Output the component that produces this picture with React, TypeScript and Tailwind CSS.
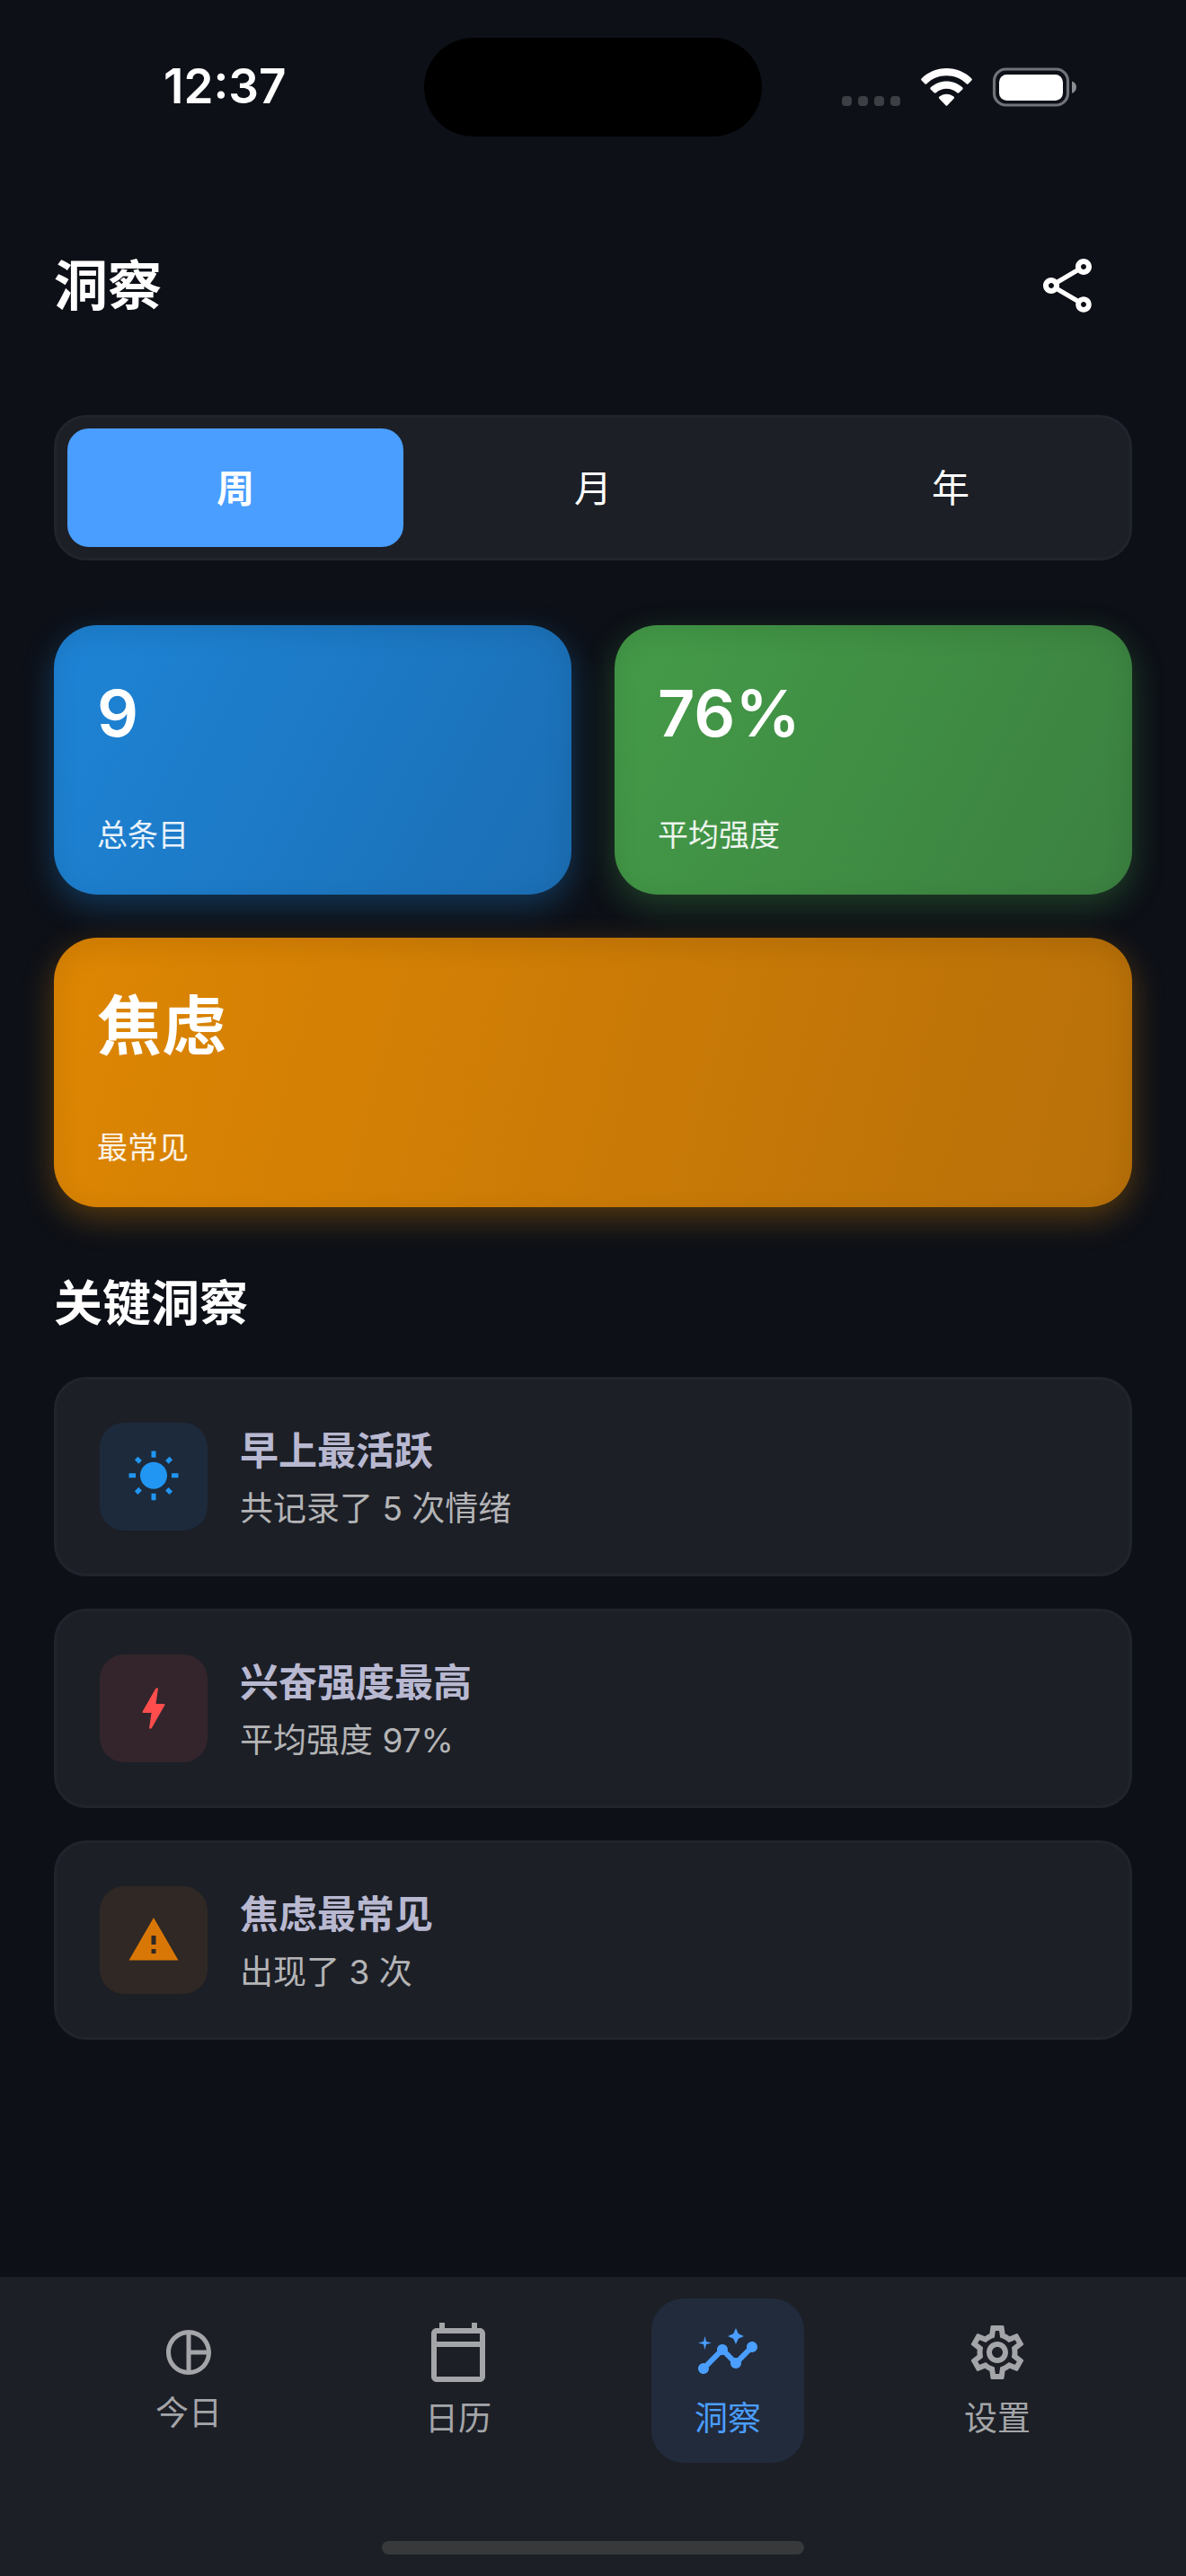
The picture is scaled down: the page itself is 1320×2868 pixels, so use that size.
import type { ReactNode } from "react";
import {
  MdBolt,
  MdInsights,
  MdOutlineCalendarToday,
  MdOutlineSettings,
  MdOutlineShare,
  MdPieChartOutline,
  MdWarning,
  MdWbSunny,
} from "react-icons/md";

const periods = ["周", "月", "年"];

function StatusBar() {
  return (
    <div className="grid h-[192px] shrink-0 grid-cols-[1fr_auto_1fr] items-start px-[120px] pt-[42px]">
      <div className="flex h-[110px] items-center pl-[62px] text-[53px] font-semibold">
        <time>12:37</time>
      </div>
      <div className="h-[110px] w-[376px] rounded-full bg-black" />
      <div className="flex h-[110px] items-center justify-end">
        <svg className="h-[44px] w-[264px]" viewBox="0 0 264 44" fill="none" aria-label="信号与电量">
          <g fill="#3c3f44">
            <rect x="1" y="32" width="11" height="11" rx="4" />
            <rect x="19" y="32" width="11" height="11" rx="4" />
            <rect x="37" y="32" width="11" height="11" rx="4" />
            <rect x="55" y="32" width="11" height="11" rx="4" />
          </g>
          <g fill="#fff">
            <path d="M117.500 1C106.500 1 97 5.200 89.600 12.400Q88.600 13.500 89.600 14.500L93.300 18.200Q94.300 19.200 95.400 18.200C101.400 12.500 109 9.300 117.500 9.300S133.600 12.500 139.600 18.200Q140.700 19.200 141.700 18.200L145.400 14.500Q146.400 13.500 145.400 12.400C138 5.200 128.500 1 117.500 1Z" />
            <path d="M117.500 15.500C110.800 15.500 104.700 18 99.800 22.300Q98.700 23.400 99.700 24.400L103.700 28.300Q104.700 29.200 105.800 28.300C109 25.500 113 23.800 117.500 23.800S126 25.500 129.200 28.300Q130.300 29.200 131.300 28.300L135.300 24.400Q136.300 23.400 135.200 22.300C130.300 18 124.200 15.500 117.500 15.500Z" />
            <path d="M117.500 29.800C114.400 29.800 111.800 30.900 109.500 32.600Q108.300 33.700 109.300 34.700L116.500 42.200Q117.500 43.200 118.500 42.200L125.700 34.700Q126.700 33.700 125.500 32.600C123.200 30.900 120.600 29.800 117.500 29.800Z" />
          </g>
          <rect x="170.500" y="2" width="82" height="40" rx="13" stroke="#717378" strokeWidth="3.200" />
          <rect x="176" y="8" width="71" height="29" rx="8.500" fill="#fff" />
          <path d="M257 15.500C260.300 16.500 262 19 262 22S260.300 27.800 257 29Z" fill="#8a8c90" />
        </svg>
      </div>
    </div>
  );
}

function StatCard({ value, label, tone }: { value: string; label: string; tone: string }) {
  return (
    <article className={`flex h-[300px] flex-col justify-between rounded-[48px] px-12 pt-[56px] pb-[42px] ${tone}`}>
      <strong className="text-[72px] leading-[84px] font-semibold">{value}</strong>
      <span className="text-[34px] leading-[48px] font-normal text-white/90">{label}</span>
    </article>
  );
}

function InsightCard({ icon, tone, title, text }: { icon: ReactNode; tone: string; title: string; text: string }) {
  return (
    <li className="flex items-center gap-9 rounded-[36px] border-3 border-[#20242d] bg-[#1c1f26] p-12">
      <div className={`flex size-[120px] shrink-0 items-center justify-center rounded-[27px] text-[60px] ${tone}`}>
        {icon}
      </div>
      <div className="flex flex-col gap-[10px]">
        <h3 className="text-[43px] leading-[62px] font-semibold text-[#b8b8d1]">{title}</h3>
        <p className="text-[37px] leading-[48px] font-normal text-[#b4b4b6]">{text}</p>
      </div>
    </li>
  );
}

function NavItem({ icon, label, active }: { icon: ReactNode; label: string; active?: boolean }) {
  return (
    <a
      href="#"
      aria-current={active ? "page" : undefined}
      className={
        active
          ? "flex flex-col items-center gap-3 rounded-[36px] bg-[#222b3c] px-12 py-6 text-[#4a9eff]"
          : "flex flex-col items-center gap-3 px-12 py-6 text-[#a4a5a8]"
      }
    >
      {icon}
      <span className="text-[37px] leading-[51px] font-normal">{label}</span>
    </a>
  );
}

export default function App() {
  return (
    <div className="flex min-h-screen flex-col bg-[#0d1017] font-['Inter','Noto_Sans_CJK_SC',sans-serif] text-white">
      <StatusBar />
      <header className="flex items-center justify-between py-[66px] pr-[72px] pl-[60px]">
        <h1 className="text-[60px] leading-[120px] font-semibold">洞察</h1>
        <button type="button" aria-label="分享" className="flex size-[120px] items-center justify-center text-[72px]">
          <MdOutlineShare />
        </button>
      </header>

      <main className="flex grow flex-col px-[60px] pt-[18px]">
        <div role="tablist" className="grid grid-cols-3 gap-6 rounded-[36px] border-3 border-[#20242d] bg-[#1c1f26] p-3">
          {periods.map((period, index) => (
            <button
              key={period}
              type="button"
              role="tab"
              aria-selected={index === 0}
              className={
                index === 0
                  ? "h-[132px] rounded-[24px] bg-[#4a9eff] text-[42px] font-semibold"
                  : "h-[132px] rounded-[24px] text-[42px] font-normal"
              }
            >
              {period}
            </button>
          ))}
        </div>

        <section className="mt-[72px] grid grid-cols-2 gap-12">
          <StatCard
            value="9"
            label="总条目"
            tone="bg-[linear-gradient(117.5deg,#1e84d6,#1b6eb4)] shadow-[0_12px_36px_#2196f34d,inset_0_8px_30px_#00000018]"
          />
          <StatCard
            value="76%"
            label="平均强度"
            tone="bg-[linear-gradient(117.5deg,#449b48,#3b8040)] shadow-[0_12px_36px_#4caf504d,inset_0_8px_30px_#00000018]"
          />
          <div className="col-span-2">
            <StatCard
              value="焦虑"
              label="最常见"
              tone="bg-[linear-gradient(104deg,#de8603,#b87009)] shadow-[0_12px_36px_#ff98004d,inset_0_8px_30px_#00000018]"
            />
          </div>
        </section>

        <h2 className="mt-[72px] text-[54px] leading-[72px] font-semibold">关键洞察</h2>
        <ul className="mt-[45px] flex flex-col gap-9">
          <InsightCard icon={<MdWbSunny />} tone="bg-[#1d2a3b] text-[#2196f3]" title="早上最活跃" text="共记录了 5 次情绪" />
          <InsightCard icon={<MdBolt />} tone="bg-[#33252b] text-[#ff4d4d]" title="兴奋强度最高" text="平均强度 97%" />
          <InsightCard icon={<MdWarning />} tone="bg-[#2f2824] text-[#d97706]" title="焦虑最常见" text="出现了 3 次" />
        </ul>
      </main>

      <footer className="flex h-[333px] shrink-0 flex-col items-center justify-between bg-[#1c1f26] pt-6 pb-6">
        <nav className="grid w-full grid-cols-4 items-center justify-items-center px-[60px]">
          <NavItem icon={<MdPieChartOutline size={60} />} label="今日" />
          <NavItem icon={<MdOutlineCalendarToday size={72} />} label="日历" />
          <NavItem icon={<MdInsights size={72} />} label="洞察" active />
          <NavItem icon={<MdOutlineSettings size={72} />} label="设置" />
        </nav>
        <div className="h-[15px] w-[470px] rounded-full bg-[#38393b]" />
      </footer>
    </div>
  );
}
